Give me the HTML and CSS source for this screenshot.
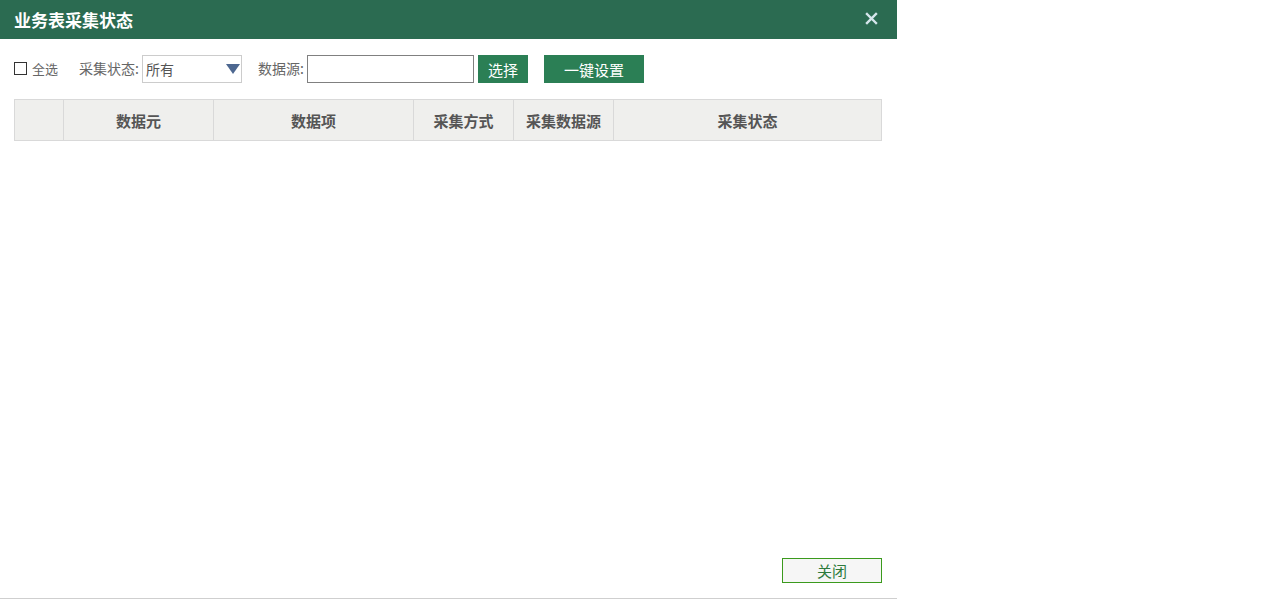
FILE: index.html
```html
<!DOCTYPE html>
<html lang="zh-CN">
<head>
<meta charset="utf-8">
<title>业务表采集状态</title>
<link rel="stylesheet" href="styles.css">
</head>
<body>
<div class="dialog">
  <div class="dlg-head">
    <span class="dlg-title">业务表采集状态</span>
    <span class="dlg-close">
      <svg width="13" height="13" viewBox="0 0 13 13"><path d="M2 2 L11 11 M11 2 L2 11" stroke="#d6e6ec" stroke-width="2.4" stroke-linecap="square"/></svg>
    </span>
  </div>
  <div class="dlg-body">
    <div class="toolbar">
      <label class="chk"><span class="box"></span><span class="chk-text">全选</span></label>
      <span class="lbl lbl-state">采集状态:</span>
      <div class="select"><span>所有</span><span class="tri"></span></div>
      <span class="lbl lbl-src">数据源:</span>
      <div class="input"></div>
      <button class="btn btn-pick">选择</button>
      <button class="btn btn-set">一键设置</button>
    </div>
    <table class="grid">
      <thead>
        <tr>
          <th class="c0"></th>
          <th class="c1">数据元</th>
          <th class="c2">数据项</th>
          <th class="c3">采集方式</th>
          <th class="c4">采集数据源</th>
          <th class="c5">采集状态</th>
        </tr>
      </thead>
    </table>
  </div>
  <div class="dlg-foot">
    <button class="btn-close">关闭</button>
  </div>
</div>
</body>
</html>
```

FILE: styles.css
```css
html, body {
  margin: 0;
  padding: 0;
  background: #fff;
  font-family: "Noto Sans CJK SC", "Liberation Sans", sans-serif;
}
.dialog {
  width: 897px;
  height: 599px;
  box-sizing: border-box;
  border-bottom: 1px solid #cfcfcf;
  display: flex;
  flex-direction: column;
}
.dlg-head {
  height: 39px;
  background: #2b6b51;
  display: flex;
  align-items: center;
  justify-content: space-between;
  padding: 0 19px 0 14px;
  flex: none;
}
.dlg-title {
  color: #fff;
  font-size: 17px;
  font-weight: bold;
  line-height: 39px;
}
.dlg-close {
  display: flex;
  width: 13px;
  height: 13px;
  margin-top: -2px;
}
.dlg-body {
  flex: 1;
  padding: 16px 15px 0 14px;
}
.toolbar {
  display: flex;
  align-items: center;
  height: 28px;
  font-size: 14px;
  color: #666;
}
.chk {
  display: flex;
  align-items: center;
  width: 44px;
  font-size: 13px;
}
.box {
  width: 11px;
  height: 11px;
  border: 1px solid #333;
  background: #fff;
  margin-top: -1px;
}
.chk-text {
  margin-left: 5px;
  margin-top: -2px;
}
.lbl {
  margin-top: -2px;
}
.lbl-state {
  margin-left: 21px;
  width: 63px;
}
.select {
  width: 100px;
  height: 28px;
  box-sizing: border-box;
  border: 1px solid #ccc;
  display: flex;
  align-items: center;
  justify-content: space-between;
  padding: 0 1px 0 3px;
  font-size: 14px;
  color: #555;
}
.tri {
  width: 0;
  height: 0;
  border-left: 7px solid transparent;
  border-right: 7px solid transparent;
  border-top: 10px solid #4d6790;
}
.lbl-src {
  margin-left: 16px;
  width: 49px;
}
.input {
  width: 167px;
  height: 28px;
  box-sizing: border-box;
  border: 1px solid #808080;
  background: #fff;
}
.btn {
  height: 28px;
  border: 0;
  background: #2b7f55;
  color: #fff;
  font-family: inherit;
  font-size: 15px;
  padding: 0;
  cursor: pointer;
}
.btn-pick {
  width: 50px;
  margin-left: 4px;
}
.btn-set {
  width: 100px;
  margin-left: 16px;
}
.grid {
  margin-top: 16px;
  width: 868px;
  border-collapse: collapse;
  table-layout: fixed;
}
.grid th {
  height: 40px;
  background: #efefed;
  border: 1px solid #d9d9d9;
  font-size: 15px;
  font-weight: bold;
  color: #555;
  text-align: center;
  padding: 0;
}
.c0 { width: 48px; }
.c1 { width: 149px; }
.c2 { width: 199px; }
.c3 { width: 99px; }
.c4 { width: 99px; }
.dlg-foot {
  display: flex;
  justify-content: flex-end;
  padding: 0 15px 15px 0;
  flex: none;
}
.btn-close {
  width: 100px;
  height: 25px;
  box-sizing: border-box;
  border: 1px solid #3b9a1d;
  background: #f6f6f6;
  color: #2e7b3c;
  font-family: inherit;
  font-size: 15px;
  padding: 0;
  line-height: 23px;
}
```
